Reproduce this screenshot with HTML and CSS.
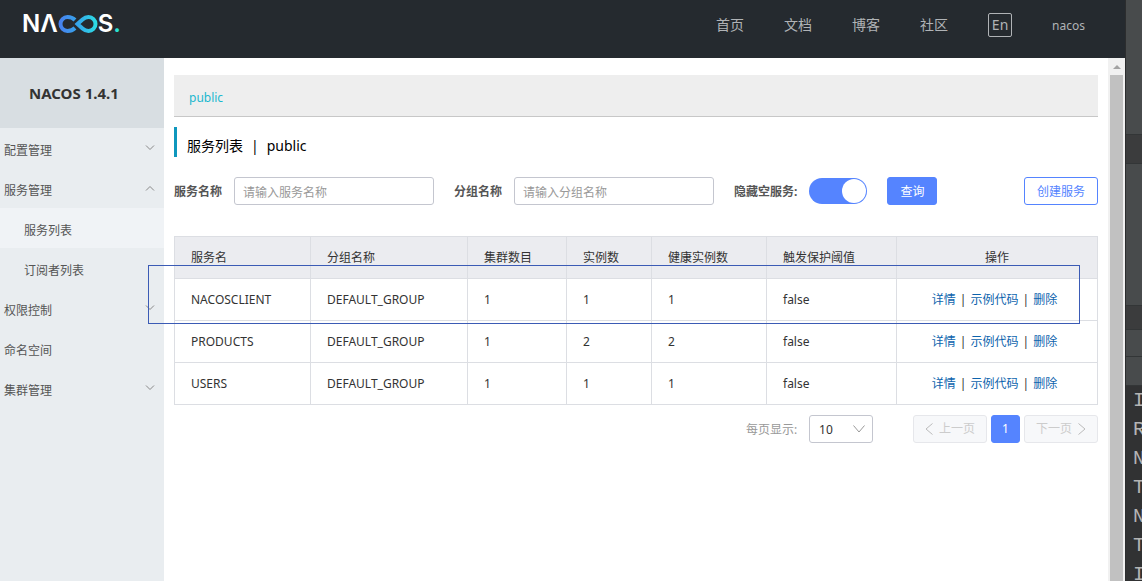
FILE: index.html
```html
<!DOCTYPE html>
<html lang="zh-CN">
<head>
<meta charset="utf-8">
<title>Nacos</title>
<link rel="stylesheet" href="styles.css">
</head>
<body>
<div class="app">
  <header class="topbar">
    <a class="logo" href="#" aria-label="Nacos">
      <span>N</span><span>Λ</span>
      <svg class="logo-loop" width="40" height="20" viewBox="0 0 40 20" fill="none" stroke-width="4">
        <defs>
          <linearGradient id="loop" x1="0" y1="0" x2="40" y2="0" gradientUnits="userSpaceOnUse">
            <stop offset="0" stop-color="#4a7df0"/>
            <stop offset=".5" stop-color="#35a6ea"/>
            <stop offset="1" stop-color="#2be0e4"/>
          </linearGradient>
        </defs>
        <path stroke="url(#loop)" d="M17 14C14.500 16.500 12.500 17 9.500 17a7 7 0 0 1 0-14C13 3 15 4 17 6"/>
        <path stroke="url(#loop)" d="M19.500 10l5-4.500C26.500 3.700 28 3 30.500 3a7 7 0 0 1 0 14C28 17 26.500 16.300 24.500 14.500z"/>
      </svg>
      <span>S</span><span class="logo-dot">.</span>
    </a>
    <nav class="topnav">
      <a href="#">首页</a>
      <a href="#">文档</a>
      <a href="#">博客</a>
      <a href="#">社区</a>
      <button class="lang" type="button">En</button>
      <a class="user" href="#">nacos</a>
    </nav>
  </header>
  <div class="body">
    <aside class="sidebar">
      <h1 class="version">NACOS 1.4.1</h1>
      <nav class="menu">
        <a href="#"><span>配置管理</span><svg width="10" height="6" viewBox="0 0 10 6"><path d="M1 .5l4 4 4-4"/></svg></a>
        <a href="#"><span>服务管理</span><svg width="10" height="6" viewBox="0 0 10 6"><path d="M1 5.500l4-4 4 4"/></svg></a>
        <a class="sub active" href="#"><span>服务列表</span></a>
        <a class="sub" href="#"><span>订阅者列表</span></a>
        <a href="#"><span>权限控制</span><svg width="10" height="6" viewBox="0 0 10 6"><path d="M1 .5l4 4 4-4"/></svg></a>
        <a href="#"><span>命名空间</span></a>
        <a href="#"><span>集群管理</span><svg width="10" height="6" viewBox="0 0 10 6"><path d="M1 .5l4 4 4-4"/></svg></a>
      </nav>
    </aside>
    <main class="content">
      <div class="namespace"><a href="#">public</a></div>
      <h2 class="heading"><span>服务列表</span><span>|</span><span>public</span></h2>
      <form class="filters">
        <label for="service">服务名称</label>
        <input class="field" id="service" type="text" placeholder="请输入服务名称">
        <label for="group">分组名称</label>
        <input class="field" id="group" type="text" placeholder="请输入分组名称">
        <label for="hide">隐藏空服务:</label>
        <input class="switch" id="hide" type="checkbox" role="switch" checked>
        <button class="btn primary" type="button">查询</button>
        <button class="btn outline" type="button">创建服务</button>
      </form>
      <table class="services">
        <colgroup><col class="c-name"><col class="c-group"><col class="c-cluster"><col class="c-count"><col class="c-healthy"><col class="c-limit"><col></colgroup>
        <thead>
          <tr><th>服务名</th><th>分组名称</th><th>集群数目</th><th>实例数</th><th>健康实例数</th><th>触发保护阈值</th><th class="ops">操作</th></tr>
        </thead>
        <tbody>
          <tr><td>NACOSCLIENT</td><td>DEFAULT_GROUP</td><td>1</td><td>1</td><td>1</td><td>false</td><td class="ops"><div><a href="#">详情</a><span>|</span><a href="#">示例代码</a><span>|</span><a href="#">删除</a></div></td></tr>
          <tr><td>PRODUCTS</td><td>DEFAULT_GROUP</td><td>1</td><td>2</td><td>2</td><td>false</td><td class="ops"><div><a href="#">详情</a><span>|</span><a href="#">示例代码</a><span>|</span><a href="#">删除</a></div></td></tr>
          <tr><td>USERS</td><td>DEFAULT_GROUP</td><td>1</td><td>1</td><td>1</td><td>false</td><td class="ops"><div><a href="#">详情</a><span>|</span><a href="#">示例代码</a><span>|</span><a href="#">删除</a></div></td></tr>
        </tbody>
      </table>
      <div class="pager">
        <label for="size">每页显示:</label>
        <div class="size">
          <select id="size"><option>10</option><option>20</option></select>
          <svg width="12" height="8" viewBox="0 0 12 8"><path d="M.5 .5L6 7l5.500-6.500"/></svg>
        </div>
        <button class="page-btn" type="button" disabled><svg width="8" height="12" viewBox="0 0 8 12"><path d="M7.500 .5L1 6l6.500 5.500"/></svg>上一页</button>
        <button class="page-btn current" type="button">1</button>
        <button class="page-btn" type="button" disabled>下一页<svg width="8" height="12" viewBox="0 0 8 12"><path d="M.5 .5L7 6 .5 11.500"/></svg></button>
      </div>
    </main>
    <div class="scrollbar" aria-hidden="true">
      <svg width="17" height="17" viewBox="0 0 17 17"><path d="M5 11l4-4 4 4z" fill="#a3a3a3"/></svg>
      <div class="thumb"></div>
    </div>
  </div>
</div>
<aside class="console">
  <div class="panes"><i></i><i></i><i></i><i></i><i></i><i></i></div>
  <div class="log"><div>I</div><div>R</div><div>N</div><div>T</div><div>N</div><div>T</div><div>I</div></div>
</aside>
<div class="marker"></div>
</body>
</html>
```
FILE: styles.css
```css
* { box-sizing: border-box; }
body {
  margin: 0;
  height: 100vh;
  display: flex;
  overflow: hidden;
  position: relative;
  background: #fff;
  color: #333;
  font: 12px/18px "Noto Sans", "Noto Sans CJK SC", sans-serif;
}
a { color: inherit; text-decoration: none; }
button, input, select { font: inherit; margin: 0; }
.app { flex: 1; min-width: 0; display: flex; flex-direction: column; }

.topbar {
  height: 58px;
  flex: none;
  display: flex;
  justify-content: space-between;
  background: #252a2f;
  color: #b0b3b6;
}
.logo {
  display: flex;
  align-items: center;
  height: 48px;
  padding-left: 22px;
  color: #fff;
  font: 600 24px/48px Inter, sans-serif;
}
.logo-dot { color: #2be0d0; }
.topnav {
  display: flex;
  align-items: center;
  gap: 40px;
  height: 50px;
  padding-right: 40px;
  font-size: 14px;
}
.lang {
  width: 24px;
  height: 24px;
  padding: 0;
  border: 1px solid #b0b3b6;
  border-radius: 2px;
  background: none;
  color: inherit;
  font-size: 14px;
  line-height: 20px;
}
.user { padding-top: 2px; font-size: 12px; }

.body { flex: 1; min-height: 0; display: flex; }
.sidebar { width: 164px; flex: none; background: #e9edf0; color: #555; }
.version {
  margin: 0;
  padding-left: 29px;
  background: #d8dee2;
  color: #333;
  font: bold 15px/70px "Noto Sans", sans-serif;
}
.menu a {
  display: flex;
  justify-content: space-between;
  align-items: center;
  height: 40px;
  padding: 0 9px 0 4px;
}
.menu span { padding-top: 6px; }
.menu .sub { padding-left: 24px; }
.menu .active { background: #f0f3f6; }
.menu svg { fill: none; stroke: #888; }

.content { flex: 1; min-width: 0; padding: 17px 10px; }
.namespace {
  height: 42px;
  padding-left: 15px;
  border-bottom: 1px solid #c7c7c7;
  background: #eee;
  color: #1bb8ce;
  line-height: 46px;
}
.heading {
  display: flex;
  gap: 8px;
  height: 30px;
  margin: 10px 0 20px;
  padding-left: 10px;
  border-left: 3px solid #0f97bd;
  color: #000;
  font-weight: normal;
  font-size: 14px;
  line-height: 38px;
}
.filters { display: flex; align-items: center; height: 28px; margin-bottom: 31px; }
.filters label { padding-top: 2px; margin-right: 12px; color: #555; font-weight: bold; }
.field {
  width: 200px;
  height: 28px;
  margin-right: 20px;
  padding: 2px 8px 0;
  border: 1px solid #c4c6cf;
  border-radius: 3px;
  background: #fff;
}
.field::placeholder { color: #999; }
.switch {
  appearance: none;
  width: 58px;
  height: 26px;
  margin-right: 20px;
  padding: 1px;
  border-radius: 13px;
  background: #5584ff;
  display: flex;
  justify-content: flex-end;
}
.switch::before { content: ""; width: 24px; height: 24px; border-radius: 50%; background: #fff; }
.btn { height: 28px; padding: 2px 12px 0; border: 1px solid #5584ff; border-radius: 3px; }
.primary { background: #5584ff; color: #fff; }
.outline { margin-left: auto; background: #fff; color: #5584ff; }

.services { width: 100%; table-layout: fixed; border-collapse: collapse; }
.services th, .services td {
  height: 42px;
  padding: 0 16px;
  border: 1px solid #dcdee3;
  text-align: left;
  font-weight: normal;
}
.services th { background: #ebecf0; }
.services .ops { text-align: center; }
.ops div { display: flex; justify-content: center; gap: 4px; padding-right: 5px; }
.ops a { color: #0c63ad; }
.c-name { width: 136px; }
.c-group { width: 157px; }
.c-cluster { width: 99px; }
.c-count { width: 85px; }
.c-healthy { width: 115px; }
.c-limit { width: 130px; }

.pager { display: flex; justify-content: flex-end; align-items: center; gap: 4px; margin-top: 10px; }
.pager label { padding-top: 2px; margin-right: 8px; color: #999; }
.pager svg { fill: none; stroke: #999; }
.size { position: relative; width: 64px; margin-right: 36px; }
.size select {
  appearance: none;
  display: block;
  width: 100%;
  height: 28px;
  padding: 2px 9px 0;
  border: 1px solid #c4c6cf;
  border-radius: 3px;
  background: #fff;
  color: #333;
}
.size svg { position: absolute; right: 8px; top: 10px; pointer-events: none; }
.page-btn {
  display: flex;
  align-items: center;
  gap: 6px;
  height: 28px;
  padding: 0 11px;
  border: 1px solid #e6e7eb;
  border-radius: 3px;
  background: #f7f8fa;
  color: #ccc;
}
.page-btn svg { stroke: #bbb; }
.page-btn.current { padding: 0 10px; border-color: #5584ff; background: #5584ff; color: #fff; }

.scrollbar { width: 17px; flex: none; display: flex; flex-direction: column; background: #f1f1f1; }
.scrollbar svg { display: block; flex: none; }
.thumb { flex: 1; margin: 0 2px; background: #c1c1c1; }

.console {
  width: 17px;
  flex: none;
  overflow: hidden;
  background: #313233;
  color: #b4b4b4;
  border-left: 1px solid #2c2d2e;
}
.panes { display: grid; grid-template-rows: 135px 29px 142px 24px 27px 29px; background: #484b4c; }
.panes i { border-bottom: 1px solid #333637; }
.panes i:nth-child(2), .panes i:nth-child(4) { background: #3b3c3d; }
.log { padding-left: 7px; font: 20px/29px "Liberation Mono", monospace; }

.marker {
  position: absolute;
  top: 265px;
  left: 148px;
  right: 62px;
  height: 59px;
  border: 1px solid #3b5bb5;
  pointer-events: none;
}
```
